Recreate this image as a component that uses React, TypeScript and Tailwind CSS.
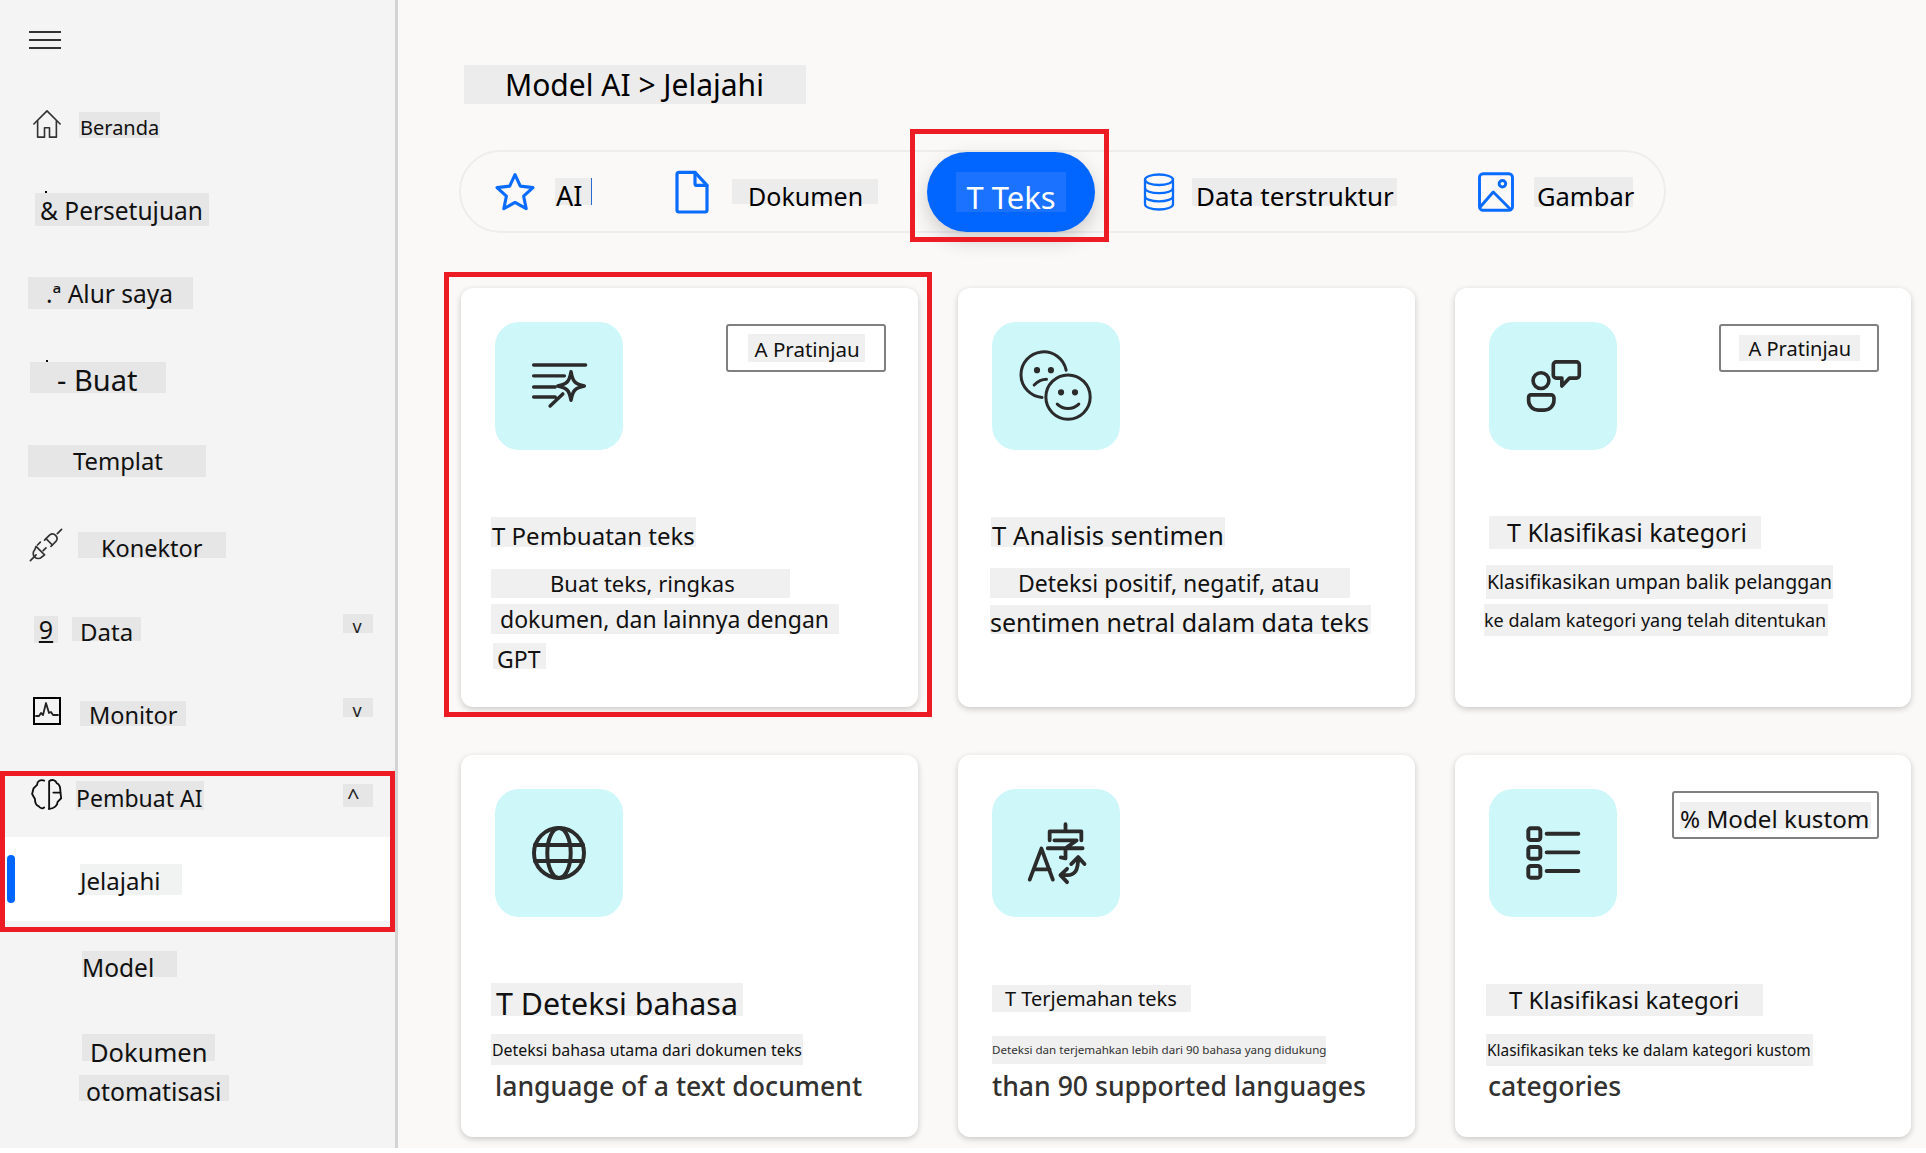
import type { ReactNode } from 'react';

const FONT = 'font-["Noto_Sans",sans-serif]';

function Svg({ className, children, sw = 1.5 }: { className: string; children: ReactNode; sw?: number }) {
  return (
    <svg viewBox="0 0 24 24" fill="none" stroke="currentColor" strokeWidth={sw} strokeLinecap="round" strokeLinejoin="round" className={className}>
      {children}
    </svg>
  );
}

const Hamburger = () => (
  <div className="ml-[29px] w-[32px] flex flex-col gap-[6px]">
    <div className="h-[2px] bg-[#333]" />
    <div className="h-[2px] bg-[#333]" />
    <div className="h-[2px] bg-[#333]" />
  </div>
);

const HomeIcon = () => (
  <Svg className="w-[32px] h-[30px] -mt-[2px] text-[#333]" sw={1.3}>
    <path d="M1.500 12 12 1.500 22.500 12" />
    <path d="M4.500 9.500V22.500H10V15H14V22.500H19.500V9.500" />
  </Svg>
);
const PlugIcon = () => (
  <Svg className="w-[34px] h-[34px] text-[#333]" sw={1.2}>
    <path d="M1 23l4-4M23 1l-3 3" />
    <path d="M5 13l6 6-2 1.500a3.500 3.500 0 0 1-5-5z" />
    <path d="M8 10l-2 2M12 14l-2 2" />
    <path d="M12 7.500l4.500 4.500 2.500-2.500a3.200 3.200 0 0 0-4.500-4.500z" />
    <path d="M12 7.500l-1 1M16.500 12l-1 1" />
  </Svg>
);
const MonitorIcon = () => (
  <div className="w-[28px] h-[28px] border-2 border-black flex items-center justify-center">
    <Svg className="w-[24px] h-[24px] text-[#222]" sw={1.8}>
      <path d="M1 17h3l2-3 2 2 3-12 3 10 2-1 2 3h5" />
    </Svg>
  </div>
);
const BrainIcon = () => (
  <Svg className="w-[34px] h-[34px] text-[#111]" sw={1.3}>
    <path d="M10 2.500C7.500 1.500 5 3 5 5.500L2.500 8 1.500 12l2 3.500C3.500 18 4.500 20 6 20.500c1 1.500 3 2.200 4 1" />
    <path d="M13.500 22.500V3c2-1.500 4.500-1 5.500 1.500 2 .5 2.500 2.500 2.500 6.500h-5" />
    <path d="M21.500 11l.5 4-2.500 2.500c0 2.500-2.500 5-6 5" />
  </Svg>
);

const Chevron = ({ glyph, className }: { glyph: string; className: string }) => (
  <span className={`ml-auto mr-[22px] w-[30px] bg-[#e6e6e6] flex items-center justify-center text-[#222] ${className}`}>
    {glyph}
  </span>
);

function Row({ children, className = '' }: { children: ReactNode; className?: string }) {
  return <div className={`h-[84px] flex items-center shrink-0 ${className}`}>{children}</div>;
}

function Sidebar() {
  return (
    <aside className={`w-[398px] h-full shrink-0 bg-[#f4f4f4] border-r-[3px] border-[#d4d4d4] flex flex-col overflow-hidden ${FONT} text-[#111]`}>
      <div className="h-[83px] shrink-0 pt-[31px]">
        <Hamburger />
      </div>

      <Row>
        <div className="ml-[31px] w-[48px]"><HomeIcon /></div>
        <span className="w-[81px] h-[26px] bg-[#e6e6e6] pl-[1px] text-[20px] leading-[31px]">Beranda</span>
      </Row>
      <Row>
        <span className="relative ml-[35px] w-[174px] h-[33px] bg-[#e6e6e6] pl-[5px] text-[24.500px] leading-[35px]">
          <i className="absolute left-[10px] -top-[2px] w-[2px] h-[2px] bg-black" />
          &amp; Persetujuan
        </span>
      </Row>
      <Row>
        <span className="ml-[28px] w-[165px] h-[32px] bg-[#e6e6e6] pl-[18px] text-[24.500px] leading-[33px]">.ª Alur saya</span>
      </Row>
      <Row>
        <span className="relative ml-[30px] w-[136px] h-[31px] bg-[#e6e6e6] pl-[27px] text-[29px] leading-[35px]">
          <i className="absolute left-[16px] -top-[2px] w-[2px] h-[2px] bg-black" />
          - Buat
        </span>
      </Row>
      <Row>
        <span className="ml-[28px] w-[178px] h-[32px] bg-[#e6e6e6] pl-[45px] text-[23.800px] leading-[32px]">Templat</span>
      </Row>
      <Row>
        <div className="ml-[29px] w-[49px]"><PlugIcon /></div>
        <span className="w-[148px] h-[26px] bg-[#e6e6e6] pl-[23px] text-[23.500px] leading-[32px]">Konektor</span>
      </Row>
      <Row>
        <span className="ml-[34px] w-[24px] h-[27px] bg-[#e6e6e6] text-center text-[25px] leading-[27px] underline">9</span>
        <span className="ml-[14px] w-[69px] h-[24px] bg-[#e6e6e6] pl-[8px] text-[24px] leading-[30px]">Data</span>
        <Chevron glyph="v" className="h-[19px] -mt-[12px] text-[18px] leading-none pt-[6px] pr-[2px]" />
      </Row>
      <Row>
        <div className="ml-[33px] w-[47px] -mt-[5px]"><MonitorIcon /></div>
        <span className="w-[106px] h-[25px] bg-[#e6e6e6] pl-[9px] text-[23.500px] leading-[29px]">Monitor</span>
        <Chevron glyph="v" className="h-[19px] -mt-[12px] text-[18px] leading-none pt-[6px] pr-[2px]" />
      </Row>
      <div className="h-[83px] -mt-[1px] flex items-center shrink-0">
        <div className="ml-[30px] w-[46px] -mt-[4px]"><BrainIcon /></div>
        <span className="w-[128px] h-[29px] bg-[#e6e6e6] text-[23px] leading-[34px]">Pembuat AI</span>
        <Chevron glyph="^" className="h-[23px] text-[22px] leading-none justify-start pl-[4px]" />
      </div>
      <Row className="bg-white mx-[5px]">
        <div className="ml-[2px] w-[8px] h-[48px] rounded-full bg-[#0066ff]" />
        <span className="ml-[65px] w-[102px] h-[31px] bg-[#f1f2f2] text-[24px] leading-[34px]">Jelajahi</span>
      </Row>
      <Row className="mt-[1px]">
        <span className="ml-[82px] w-[95px] h-[26px] bg-[#e6e6e6] text-[24.500px] leading-[34px]">Model</span>
      </Row>
      <div className="pt-[28px] flex flex-col">
        <span className="ml-[82px] w-[133px] h-[27px] bg-[#e6e6e6] pl-[8px] text-[25.500px] leading-[36px]">Dokumen</span>
        <span className="ml-[79px] mt-[14px] w-[150px] h-[26px] bg-[#e6e6e6] pl-[7px] text-[24.800px] leading-[32px]">otomatisasi</span>
      </div>
    </aside>
  );
}

function Tabs() {
  const icon = 'text-[#0a6cff] shrink-0';
  return (
    <div className="ml-[61px] mt-[46px] w-[1207px] h-[83px] rounded-full border-2 border-[#ededed] flex items-center">
      <Svg className={`ml-[32px] w-[44px] h-[44px] ${icon}`} sw={1.7}>
        <path d="M12 2.500l2.900 6.300 6.900.8-5.100 4.700 1.400 6.800-6.100-3.400-6.100 3.400 1.400-6.800-5.100-4.700 6.900-.8z" />
      </Svg>
      <span className="ml-[18px] w-[37px] h-[27px] bg-[#ececec] border-r border-[#2b6bd0] pl-[1px] text-[27px] leading-[36px] text-black">AI</span>
      <Svg className={`ml-[76px] w-[48px] h-[48px] ${icon}`} sw={1.6}>
        <path d="M4.500 3.200a1 1 0 0 1 1-1h8l6 6.500V21a1 1 0 0 1-1 1h-13a1 1 0 0 1-1-1z" />
        <path d="M13.500 2.200v5.500a1 1 0 0 0 1 1h5" />
      </Svg>
      <span className="ml-[16px] w-[146px] h-[25px] bg-[#ececec] pl-[16px] text-[25px] leading-[34px] text-black">Dokumen</span>
      <div className="ml-[49px] w-[168px] h-[80px] shrink-0 rounded-full bg-[#0066ff] shadow-[0_8px_20px_rgba(0,0,0,0.18)] flex items-center justify-center">
        <span className="w-[110px] h-[40px] bg-[#1a72ff] text-center text-white text-[31px] leading-[50px]">T Teks</span>
      </div>
      <Svg className={`ml-[43px] w-[42px] h-[42px] ${icon}`} sw={1.300}>
        <ellipse cx="12" cy="5" rx="8" ry="3" />
        <path d="M4 5v14c0 1.700 3.600 3 8 3s8-1.300 8-3V5" />
        <path d="M4 9.700c0 1.700 3.600 3 8 3s8-1.300 8-3M4 14.400c0 1.700 3.600 3 8 3s8-1.300 8-3" />
      </Svg>
      <span className="ml-[12px] w-[205px] h-[28px] bg-[#ececec] pl-[4px] text-[26px] leading-[36px] text-black">Data terstruktur</span>
      <Svg className={`ml-[77px] w-[44px] h-[44px] ${icon}`} sw={1.6}>
        <rect x="3" y="2" width="18" height="20" rx="2" />
        <circle cx="15.500" cy="7.500" r="1.800" />
        <path d="M3.500 20l7-8 9.500 9.500" />
      </Svg>
      <span className="ml-[16px] w-[99px] h-[30px] bg-[#ececec] text-[25.500px] leading-[38px] pl-[3px] text-black">Gambar</span>
    </div>
  );
}

const iconCls = 'w-[76px] h-[76px] text-[#2b2b2b]';

const TextGenIcon = () => (
  <Svg className={iconCls} sw={1.100}>
    <path d="M4 5.400h16.400M4 8.800h9.700M4 12.300h6.800M4 15.500h6.800M9.200 18.300l4-3.800" />
    <path d="M15.800 7.500c.5 3 1.200 3.900 4.200 4.500-3 .6-3.700 1.500-4.200 4.500-.5-3-1.200-3.900-4.200-4.500 3-.6 3.700-1.500 4.200-4.500z" />
  </Svg>
);
const FacesIcon = () => (
  <Svg className={iconCls} sw={0.950}>
    <path d="M15.200 7A7.200 7.200 0 1 0 7.600 15.600" />
    <circle cx="15.800" cy="15.500" r="7" />
    <path d="M5.100 11.700c1.200-1.200 2.500-1.800 3.900-1.800" />
    <circle cx="6" cy="7" r=".5" fill="currentColor" />
    <circle cx="10.400" cy="7" r=".5" fill="currentColor" />
    <circle cx="13.600" cy="14" r=".5" fill="currentColor" />
    <circle cx="18" cy="14" r=".5" fill="currentColor" />
    <path d="M12.400 17.700c2 1.900 4.800 1.900 6.800 0" />
  </Svg>
);
const PersonChatIcon = () => (
  <Svg className={iconCls} sw={1.150}>
    <circle cx="8.200" cy="10.300" r="2.500" />
    <path d="M5 14.800h6.400a.9.9 0 0 1 .9.900v.9a3 3 0 0 1-3 3H7.300a3 3 0 0 1-3-3v-.9a.9.9 0 0 1 .7-.9z" />
    <path d="M13 4.400h6.400a.9.9 0 0 1 .9.900v3.300a.9.9 0 0 1-.9.900h-2.200l-2.400 2.500V9.500H13a.9.9 0 0 1-.9-.9V5.300a.9.9 0 0 1 .9-.9z" />
  </Svg>
);
const GlobeIcon = () => (
  <Svg className={iconCls} sw={1.250}>
    <circle cx="12" cy="12" r="7.900" />
    <ellipse cx="12" cy="12" rx="3.700" ry="7.900" />
    <path d="M4.400 9.500h15.200M4.400 14.500h15.200" />
  </Svg>
);
const TranslateIcon = () => (
  <Svg className={iconCls} sw={1.200}>
    <path d="M15 2.900v2.300M10 8V5.200h10V8M11.500 8h7L15 10.500v3.200l-1.500-.3M9.400 10.500h11" />
    <path d="M3.700 20.400 7.400 10.600 11 20.400M5 17.200h5" />
    <path d="M14 19h1.500c2.500 0 3.500-1.500 3.500-5.500M16.800 15.500 19 13.300l2 2.200M15.500 17l-2.100 2 2.100 2.200" />
  </Svg>
);
const ListIcon = () => (
  <Svg className={iconCls} sw={1.250}>
    <rect x="4.200" y="4.200" width="3.800" height="3.700" rx=".8" />
    <rect x="4.200" y="10.100" width="3.800" height="3.700" rx=".8" />
    <rect x="4.200" y="16.100" width="3.800" height="3.700" rx=".8" />
    <path d="M10 5.900h10M10 11.800h10M10 17.700h10" />
  </Svg>
);

const IconBox = ({ children }: { children: ReactNode }) => (
  <div className="w-[128px] h-[128px] rounded-[24px] bg-[#cef7fa] flex items-center justify-center">{children}</div>
);

function Badge({ children, className = '' }: { children: ReactNode; className?: string }) {
  return (
    <div className={`h-[48px] mt-[2px] border-2 border-[#808080] rounded-[3px] flex items-center justify-center bg-white ${className}`}>
      {children}
    </div>
  );
}

function Card({ className, icon, badge, children }: { className: string; icon: ReactNode; badge?: ReactNode; children: ReactNode }) {
  return (
    <div className={`bg-white rounded-[12px] shadow-[0_2px_6px_rgba(0,0,0,0.2)] pt-[34px] ${className}`}>
      <div className="flex items-start justify-between pl-[34px] pr-[32px]">
        <IconBox>{icon}</IconBox>
        {badge}
      </div>
      {children}
    </div>
  );
}

const patch = 'block bg-[#f0f0f0] text-[#111]';

function Cards() {
  return (
    <div className="ml-[63px] mt-[55px] w-[1450px] grid grid-cols-[457px_457px_456px] gap-x-[40px] gap-y-[48px]">
      <Card
        className="h-[419px]"
        icon={<TextGenIcon />}
        badge={
          <Badge className="w-[160px]">
            <span className="w-[117px] h-[28px] bg-[#f0f0f0] pl-[7px] text-[20.500px] leading-[30px]">A Pratinjau</span>
          </Badge>
        }
      >
        <span className={`${patch} mt-[67px] ml-[30px] w-[205px] h-[30px] text-[24px] leading-[37px] pl-[1px]`}>T Pembuatan teks</span>
        <span className={`${patch} mt-[22px] ml-[30px] w-[299px] h-[29px] text-[22px] leading-[29px] pl-[59px]`}>Buat teks, ringkas</span>
        <span className={`${patch} mt-[6px] ml-[30px] w-[348px] h-[30px] text-[23px] leading-[31px] pl-[9px]`}>dokumen, dan lainnya dengan</span>
        <span className={`${patch} mt-[9px] ml-[32px] w-[53px] h-[26px] text-[23px] leading-[32px] pl-[4px]`}>GPT</span>
      </Card>

      <Card className="h-[419px]" icon={<FacesIcon />}>
        <span className={`${patch} mt-[67px] ml-[33px] w-[234px] h-[30px] text-[25.700px] leading-[37px] pl-[1px]`}>T Analisis sentimen</span>
        <span className={`${patch} mt-[21px] ml-[32px] w-[360px] h-[30px] text-[23px] leading-[31px] pl-[28px]`}>Deteksi positif, negatif, atau</span>
        <span className={`${patch} mt-[7px] ml-[32px] w-[381px] h-[29px] text-[25px] leading-[34px]`}>sentimen netral dalam data teks</span>
      </Card>

      <Card
        className="h-[419px]"
        icon={<PersonChatIcon />}
        badge={
          <Badge className="w-[160px]">
            <span className="w-[121px] h-[26px] bg-[#f0f0f0] pl-[10px] text-[20px] leading-[28px]">A Pratinjau</span>
          </Badge>
        }
      >
        <span className={`${patch} mt-[66px] ml-[34px] w-[272px] h-[33px] text-[25px] leading-[33px] pl-[18px]`}>T Klasifikasi kategori</span>
        <span className={`${patch} mt-[16px] ml-[31px] w-[347px] h-[34px] text-[19.500px] leading-[34px] pl-[1px]`}>Klasifikasikan umpan balik pelanggan</span>
        <span className={`${patch} mt-[5px] ml-[29px] w-[344px] h-[32px] text-[18px] leading-[32px]`}>ke dalam kategori yang telah ditentukan</span>
      </Card>

      <Card className="h-[382px]" icon={<GlobeIcon />}>
        <span className={`${patch} mt-[66px] ml-[30px] w-[252px] h-[33px] text-[30.400px] leading-[42px] pl-[5px]`}>T Deteksi bahasa</span>
        <span className={`${patch} mt-[18px] ml-[30px] w-[312px] h-[31px] text-[15.900px] leading-[33px] pl-[1px]`}>Deteksi bahasa utama dari dokumen teks</span>
        <div className="ml-[34px] mt-[3px] text-[26.600px] leading-[36px] font-medium text-[#323130]">language of a text document</div>
      </Card>

      <Card className="h-[382px]" icon={<TranslateIcon />}>
        <span className={`${patch} mt-[68px] ml-[34px] w-[199px] h-[27px] text-[20px] leading-[28px] pl-[13px]`}>T Terjemahan teks</span>
        <span className={`${patch} mt-[24px] ml-[34px] w-[334px] h-[28px] text-[11.600px] leading-[28px] text-[#333]`}>Deteksi dan terjemahkan lebih dari 90 bahasa yang didukung</span>
        <div className="ml-[34px] mt-[4px] text-[26.600px] leading-[36px] font-medium text-[#323130]">than 90 supported languages</div>
      </Card>

      <Card
        className="h-[382px]"
        icon={<ListIcon />}
        badge={
          <Badge className="w-[207px]">
            <span className="w-[191px] h-[27px] bg-[#f0f0f0] text-[24.200px] leading-[34px]">% Model kustom</span>
          </Badge>
        }
      >
        <span className={`${patch} mt-[67px] ml-[31px] w-[277px] h-[32px] text-[24px] leading-[32px] pl-[23px]`}>T Klasifikasi kategori</span>
        <span className={`${patch} mt-[18px] ml-[31px] w-[327px] h-[32px] text-[15.400px] leading-[33px] pl-[1px]`}>Klasifikasikan teks ke dalam kategori kustom</span>
        <div className="ml-[33px] mt-[2px] text-[26.600px] leading-[36px] font-medium text-[#323130]">categories</div>
      </Card>
    </div>
  );
}

export default function App() {
  return (
    <div className={`relative w-[1926px] h-[1153px] bg-white overflow-hidden whitespace-nowrap ${FONT}`}>
      <div className="h-[1148px] flex bg-[#faf9f8]">
        <Sidebar />
        <main className="flex-1 min-w-0 text-[#111]">
          <div className="ml-[66px] mt-[65px] w-[342px] h-[39px] bg-[#ececec] pl-[41px] text-[30px] leading-[40px] text-black">
            Model AI &gt; Jelajahi
          </div>
          <Tabs />
          <Cards />
        </main>
      </div>

      {/* annotation boxes drawn over the shot */}
      <div className="pointer-events-none absolute left-[910px] top-[129px] w-[199px] h-[113px] border-[5px] border-[#ed1c24]" />
      <div className="pointer-events-none absolute left-[444px] top-[272px] w-[488px] h-[445px] border-[5px] border-[#ed1c24]" />
      <div className="pointer-events-none absolute left-0 top-[771px] w-[395px] h-[161px] border-[5px] border-[#ed1c24]" />
    </div>
  );
}
